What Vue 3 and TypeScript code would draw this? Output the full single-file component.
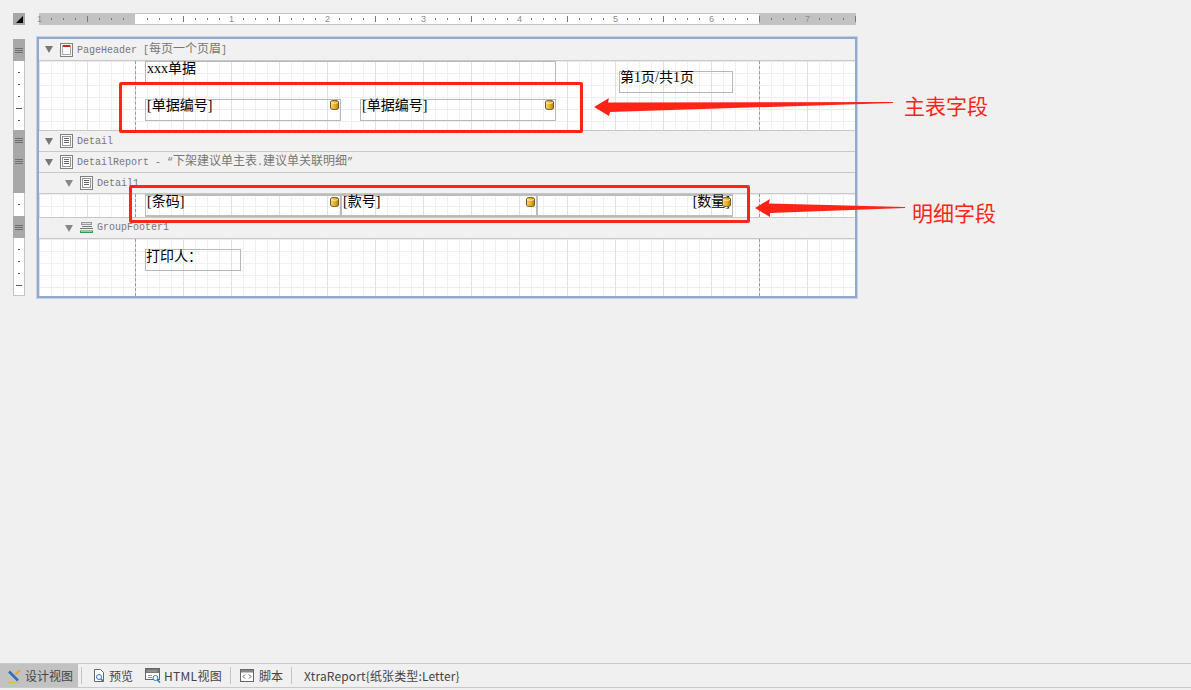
<script setup lang="ts">
interface Tick { kind: 'dot' | 'long' | 'num' | 'none'; label?: string; dark: boolean }

const ticks: Tick[] = Array.from({ length: 69 }, (_, i) => {
  const dark = i < 8 || i >= 60
  if (i === 8) return { kind: 'none', dark }
  if (i % 8 === 0) {
    const n = i === 0 ? 1 : i / 8 - 1
    return { kind: 'num', label: String(n), dark }
  }
  if (i % 4 === 0) return { kind: 'long', dark }
  return { kind: 'dot', dark }
})

const rail: { type: 'grip' | 'flat' | 'white'; height: number; marks?: number[] }[] = [
  { type: 'grip', height: 22 },
  { type: 'white', height: 69, marks: [0, 0, 0, 1, 0] },
  { type: 'grip', height: 21 },
  { type: 'grip', height: 21 },
  { type: 'flat', height: 21 },
  { type: 'white', height: 23, marks: [0] },
  { type: 'grip', height: 22 },
  { type: 'white', height: 58, marks: [0, 0, 0, 1] },
]
</script>

<template>
  <div class="page">
    <div class="work">
      <div class="top-row">
        <div class="corner"><svg width="12" height="12" viewBox="0 0 12 12"><path d="M3 10 L10 3 L10 10 Z" fill="#000" /></svg></div>
        <div class="ruler">
          <div v-for="(t, i) in ticks" :key="i" class="cell" :class="{ dark: t.dark }">
            <span v-if="t.kind === 'num'" class="num">{{ t.label }}</span>
            <i v-else-if="t.kind !== 'none'" :class="t.kind"></i>
          </div>
        </div>
      </div>

      <div class="body-row">
        <div class="rail">
          <div v-for="(r, i) in rail" :key="i" :class="'rail-' + r.type" :style="{ height: r.height + 'px' }">
            <template v-if="r.type === 'grip'"><b></b><b></b><b></b></template>
            <template v-if="r.type === 'white'">
              <i v-for="(m, j) in r.marks" :key="j" :class="m ? 'mark-long' : 'mark'"></i>
            </template>
          </div>
        </div>

        <div class="designer">
          <div class="band-head first">
            <svg class="tri" width="8" height="7" viewBox="0 0 8 7"><path d="M0 0H8L4 7Z" fill="#777" /></svg>
            <svg class="bi" width="13" height="14" viewBox="0 0 13 14"><rect x=".5" y=".5" width="12" height="13" fill="#f8f8f8" stroke="#808080" /><rect x="2.500" y="2.500" width="8" height="9" fill="#fff" stroke="#aaa" /><rect x="3" y="2" width="7" height="2" fill="#d21f1f" /></svg>
            <span class="band-text">PageHeader [<span class="cn">每页一个页眉</span>]</span>
          </div>
          <div class="canvas c-header">
            <div class="ctl xxx">xxx单据</div>
            <div class="ctl high f1">[单据编号]<svg class="db" width="9" height="10" viewBox="0 0 9 10"><use href="#cyl" /></svg></div>
            <div class="ctl high f2">[单据编号]<svg class="db" width="9" height="10" viewBox="0 0 9 10"><use href="#cyl" /></svg></div>
            <div class="ctl high pg">第1页/共1页</div>
          </div>

          <div class="band-head">
            <svg class="tri" width="8" height="7" viewBox="0 0 8 7"><path d="M0 0H8L4 7Z" fill="#777" /></svg>
            <svg class="bi" width="13" height="14" viewBox="0 0 13 14"><use href="#lines" /></svg>
            <span class="band-text low">Detail</span>
          </div>
          <div class="band-head">
            <svg class="tri" width="8" height="7" viewBox="0 0 8 7"><path d="M0 0H8L4 7Z" fill="#777" /></svg>
            <svg class="bi" width="13" height="14" viewBox="0 0 13 14"><use href="#lines" /></svg>
            <span class="band-text up">DetailReport - “<span class="cn">下架建议单主表</span>.<span class="cn">建议单关联明细</span>”</span>
          </div>
          <div class="band-head sub">
            <svg class="tri" width="8" height="7" viewBox="0 0 8 7"><path d="M0 0H8L4 7Z" fill="#888" /></svg>
            <svg class="bi" width="13" height="14" viewBox="0 0 13 14"><use href="#lines" /></svg>
            <span class="band-text low">Detail1</span>
          </div>
          <div class="canvas c-detail">
            <div class="ctl high d d1">[条码]<svg class="db" width="9" height="10" viewBox="0 0 9 10"><use href="#cyl" /></svg></div>
            <div class="ctl high d d2">[款号]<svg class="db" width="9" height="10" viewBox="0 0 9 10"><use href="#cyl" /></svg></div>
            <div class="ctl high d d3">[数量]<svg class="db" width="9" height="10" viewBox="0 0 9 10"><use href="#cyl" /></svg></div>
          </div>
          <div class="band-head sub">
            <svg class="tri" width="8" height="7" viewBox="0 0 8 7"><path d="M0 0H8L4 7Z" fill="#888" /></svg>
            <svg class="bi" width="13" height="12" viewBox="0 0 13 12"><rect x="1.500" y=".5" width="10" height="2" fill="#ddd" stroke="#999" /><path d="M2 4.500H12M0 6.500H13" stroke="#777" /><rect x=".5" y="9" width="12" height="1.500" fill="#fff" stroke="#2f9e44" /></svg>
            <span class="band-text">GroupFooter1</span>
          </div>
          <div class="canvas c-footer">
            <div class="ctl pr">打印人：</div>
          </div>
        </div>
      </div>
    </div>

    <footer class="status">
      <div class="tab active">
        <svg width="13" height="13" viewBox="0 0 13 13"><path d="M1 1.500L10 10.500" stroke="#2f6fb5" stroke-width="2.500" /><path d="M12 0L7.500 4.500" stroke="#e5a93a" stroke-width="2" /><path d="M0 12.500H12" stroke="#e5a93a" stroke-dasharray="1 1" /></svg>
        <span>设计视图</span>
      </div>
      <i class="sep s1"></i>
      <div class="tab t-prev">
        <svg width="13" height="14" viewBox="0 0 13 14"><path d="M1.500 .5H7.500L10.500 3.500V12.500H1.500Z" fill="#fff" stroke="#666" /><circle cx="6" cy="8" r="2.500" fill="#fff" stroke="#2f6fb5" /><path d="M8 10L10.500 12.500" stroke="#2f6fb5" stroke-width="1.500" /></svg>
        <span>预览</span>
      </div>
      <div class="tab t-html">
        <svg width="16" height="15" viewBox="0 0 16 15"><rect x=".5" y=".5" width="14" height="11" fill="#fff" stroke="#666" /><rect x="1" y="1" width="13" height="4" fill="#777" /><path d="M2.500 3H12" stroke="#ddd" stroke-dasharray="1 1" /><path d="M3 7.500H7M3 9.500H7" stroke="#999" /><circle cx="10.500" cy="10" r="2.500" fill="#fff" stroke="#2f6fb5" /><path d="M12.500 12L15 14.500" stroke="#2f6fb5" stroke-width="1.500" /></svg>
        <span class="html-label">HTML视图</span>
      </div>
      <i class="sep s2"></i>
      <div class="tab t-script">
        <svg width="14" height="13" viewBox="0 0 14 13"><rect x=".5" y=".5" width="13" height="12" fill="#fff" stroke="#666" /><rect x="1" y="1" width="12" height="2.500" fill="#888" /><path d="M5 5.500L3 7.500L5 9.500M9 5.500L11 7.500L9 9.500" fill="none" stroke="#555" /></svg>
        <span>脚本</span>
      </div>
      <i class="sep s3"></i>
      <span class="info">XtraReport{纸张类型:Letter}</span>
    </footer>

    <svg class="defs" width="0" height="0">
      <defs>
        <linearGradient id="gold" x1="0" x2="1" y1="0" y2="0"><stop offset="0" stop-color="#f7d77a" /><stop offset=".6" stop-color="#e5aa22" /><stop offset="1" stop-color="#b97f10" /></linearGradient>
        <symbol id="cyl" viewBox="0 0 9 10"><path d="M.5 2C.5 .9 2.500 .5 4.500 .5S8.500 .9 8.500 2V8C8.500 9.100 6.500 9.500 4.500 9.500S.5 9.100 .5 8Z" fill="url(#gold)" stroke="#6b5a2a" /><path d="M1 2.500C3 3.500 6 3.500 8 2.500" fill="none" stroke="#fff2c2" /></symbol>
        <symbol id="lines" viewBox="0 0 13 14"><rect x=".5" y=".5" width="12" height="13" fill="#f8f8f8" stroke="#808080" /><rect x="2.500" y="2.500" width="8" height="9" fill="#fff" stroke="#999" /><path d="M4 4.500H9M4 6.500H9M4 8.500H9" stroke="#666" /></symbol>
      </defs>
    </svg>

    <div class="box box-a"></div>
    <div class="box box-b"></div>
    <svg class="arrows" width="1191" height="690" viewBox="0 0 1191 690">
      <path d="M594 107L609 98L608 102.500L893 102L893 103L610 112L609 116Z" fill="#ff2416" />
      <path d="M755 208L770 199L769 203.500L905 207L905 208L770 213L770 217Z" fill="#ff2416" />
    </svg>
    <div class="note n1">主表字段</div>
    <div class="note n2">明细字段</div>
  </div>
</template>

<style>
html, body { margin: 0; background: #f0f0f0; }
</style>

<style scoped>
.page {
  position: relative;
  width: 1191px;
  height: 690px;
  display: flex;
  flex-direction: column;
  overflow: hidden;
  background: #f0f0f0;
  font-family: "Liberation Serif", "Noto Sans CJK SC", serif;
}
.work { flex: 1; padding: 13px 0 0 13px; }
.top-row { display: flex; height: 12px; }
.corner { width: 12px; height: 12px; background: #a6a6a6; }
.corner svg { display: block; }
.ruler {
  display: flex;
  margin-left: 14px;
  width: 817px;
  height: 12px;
  box-sizing: border-box;
  border-top: 1px solid #c4c4c4;
  border-bottom: 1px solid #c4c4c4;
  background: #fff;
}
.cell {
  width: 12px;
  flex: none;
  display: flex;
  align-items: center;
  color: #8a8a9c;
  font: 9px/10px "Liberation Sans", sans-serif;
}
.cell:last-child { width: 1px; }
.cell.dark { background: #c2c2c2; }
.num { margin-left: -2px; }
.dot { display: block; width: 1px; height: 2px; background: #777; }
.long { display: block; width: 1px; height: 6px; background: #777; }

.body-row { display: flex; margin-top: 12px; }
.rail {
  width: 12px;
  margin-top: 2px;
  display: flex;
  flex-direction: column;
}
.rail-grip, .rail-flat {
  background: #a8a8a8;
  display: flex;
  flex-direction: column;
  align-items: center;
  justify-content: center;
  gap: 1px;
}
.rail-grip b { display: block; width: 8px; height: 1px; background: #6f6f6f; }
.rail-white {
  box-sizing: border-box;
  background: #fff;
  border: 1px solid #c4c4c4;
  border-top: 0;
  border-bottom: 0;
  display: flex;
  flex-direction: column;
  align-items: center;
  padding-top: 11px;
  gap: 11px;
}
.rail-white:last-child { border-bottom: 1px solid #c4c4c4; }
.mark { display: block; width: 2px; height: 1px; background: #555; }
.mark-long { display: block; width: 6px; height: 1px; background: #555; }

.designer {
  margin-left: 12px;
  width: 816px;
  border: 2px solid #8faacd;
  box-shadow: 0 0 0 1px #c3d1e4;
  background: #f1f1f1;
}
.band-head {
  height: 20px;
  border-bottom: 1px solid #c8c8c8;
  display: flex;
  align-items: center;
  padding-left: 6px;
  background: #f1f1f1;
}
.band-head.first { height: 21px; }
.band-head.sub { padding-left: 26px; }
.tri { flex: none; }
.bi { flex: none; margin-left: 7px; }
.band-text {
  margin-left: 4px;
  color: #777;
  font: 10px/14px "Liberation Mono", "Noto Sans CJK SC", monospace;
  white-space: pre;
}
.band-text.low { margin-top: 2px; }
.band-text.up { margin-bottom: 2px; }
.cn { font-size: 12px; font-family: "Noto Sans CJK SC", sans-serif; }

.canvas {
  position: relative;
  border-bottom: 1px solid #c8c8c8;
  background-color: #fff;
  background-image:
    linear-gradient(to right, #e0e0e0 1px, transparent 1px),
    linear-gradient(to bottom, #ececec 1px, transparent 1px),
    linear-gradient(to right, #f0f0f0 1px, transparent 1px),
    linear-gradient(to bottom, #f0f0f0 1px, transparent 1px);
  background-size: 48px 48px, 48px 48px, 12px 12px, 12px 12px;
}
.canvas::before, .canvas::after {
  content: "";
  position: absolute;
  top: 0;
  bottom: 0;
  width: 0;
  border-left: 1px dashed #999;
}
.canvas::before { left: 96px; }
.canvas::after { left: 720px; }
.c-header { height: 69px; }
.c-detail { height: 23px; }
.c-footer { height: 57px; border-bottom: 0; }

.ctl {
  position: absolute;
  z-index: 1;
  box-sizing: border-box;
  border: 1px solid #b8b8b8;
  color: #000;
  font-size: 14px;
  line-height: 14px;
  padding-left: 1px;
  white-space: nowrap;
}
.high { line-height: 12px; }
.db { position: absolute; right: 1px; top: 0; }
.xxx { left: 106px; top: 0; width: 411px; height: 23px; }
.f1 { left: 106px; top: 38px; width: 196px; height: 22px; }
.f2 { left: 321px; top: 38px; width: 196px; height: 22px; }
.pg { left: 580px; top: 10px; width: 114px; height: 22px; padding-left: 0; }
.d { top: 0; height: 23px; border-width: 2px 1px; border-color: #bcbcbc; }
.d1 { left: 106px; width: 196px; }
.d2 { left: 302px; width: 196px; }
.d3 { left: 498px; width: 196px; text-align: right; padding-right: 2px; }
.pr { left: 106px; top: 10px; width: 96px; height: 22px; padding-left: 0; }

.d .db { top: 1px; right: 1px; }
.defs { position: absolute; }

.status {
  flex: none;
  position: relative;
  height: 23px;
  margin-bottom: 2px;
  border-top: 1px solid #c8c8c8;
  border-bottom: 1px solid #c8c8c8;
  display: flex;
  align-items: center;
  color: #444;
  font: 12px/16px "Noto Sans CJK SC", "Liberation Sans", sans-serif;
}
.tab { display: flex; align-items: center; height: 100%; }
.tab svg { flex: none; }
.active { width: 78px; box-sizing: border-box; padding-left: 8px; gap: 4px; background: #c2c2c2; }
.active svg { margin-top: 2px; }
.sep { display: block; width: 1px; height: 17px; background: #c4c4c4; }
.s1 { margin-left: 3px; }
.t-prev { margin-left: 11px; gap: 3px; }
.t-html { margin-left: 12px; gap: 3px; }
.html-label { letter-spacing: 0.3px; }
.s2 { margin-left: 8px; }
.t-script { margin-left: 9px; gap: 5px; }
.s3 { margin-left: 8px; }
.info { margin-left: 12px; letter-spacing: 0.14px; }

.box {
  position: absolute;
  box-sizing: border-box;
  border: 3px solid #ff2416;
  border-radius: 2px;
  z-index: 2;
}
.box-a { left: 119px; top: 82px; width: 464px; height: 51px; }
.box-b { left: 129px; top: 185px; width: 621px; height: 38px; }
.arrows { position: absolute; left: 0; top: 0; z-index: 2; pointer-events: none; }
.note {
  position: absolute;
  z-index: 2;
  color: #ff2416;
  font: 21px/24px "Noto Sans CJK SC", sans-serif;
}
.n1 { left: 904px; top: 93px; }
.n2 { left: 912px; top: 200px; }
</style>
